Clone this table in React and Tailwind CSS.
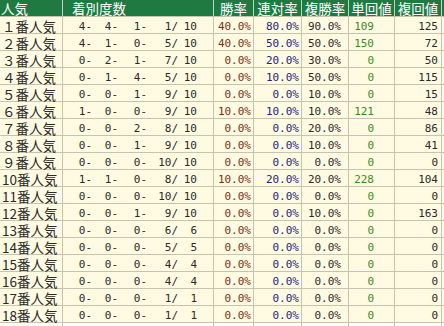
const FW = ["０", "１", "２", "３", "４", "５", "６", "７", "８", "９"];

// [1着, 2着, 3着, 着外, 出走, 勝率, 連対率, 複勝率, 単回値, 複回値]
const rows = [
  [4, 4, 1, 1, 10, "40.0%", "80.0%", "90.0%", 109, 125],
  [4, 1, 0, 5, 10, "40.0%", "50.0%", "50.0%", 150, 72],
  [0, 2, 1, 7, 10, "0.0%", "20.0%", "30.0%", 0, 50],
  [0, 1, 4, 5, 10, "0.0%", "10.0%", "50.0%", 0, 115],
  [0, 0, 1, 9, 10, "0.0%", "0.0%", "10.0%", 0, 15],
  [1, 0, 0, 9, 10, "10.0%", "10.0%", "10.0%", 121, 48],
  [0, 0, 2, 8, 10, "0.0%", "0.0%", "20.0%", 0, 86],
  [0, 0, 1, 9, 10, "0.0%", "0.0%", "10.0%", 0, 41],
  [0, 0, 0, 10, 10, "0.0%", "0.0%", "0.0%", 0, 0],
  [1, 1, 0, 8, 10, "10.0%", "20.0%", "20.0%", 228, 104],
  [0, 0, 0, 10, 10, "0.0%", "0.0%", "0.0%", 0, 0],
  [0, 0, 1, 9, 10, "0.0%", "0.0%", "10.0%", 0, 163],
  [0, 0, 0, 6, 6, "0.0%", "0.0%", "0.0%", 0, 0],
  [0, 0, 0, 5, 5, "0.0%", "0.0%", "0.0%", 0, 0],
  [0, 0, 0, 4, 4, "0.0%", "0.0%", "0.0%", 0, 0],
  [0, 0, 0, 4, 4, "0.0%", "0.0%", "0.0%", 0, 0],
  [0, 0, 0, 1, 1, "0.0%", "0.0%", "0.0%", 0, 0],
  [0, 0, 0, 1, 1, "0.0%", "0.0%", "0.0%", 0, 0],
];

const cols = "grid grid-cols-[62px_150px_39px_47px_46px_45px_46px_1fr] gap-px";
const jp = "font-['Noto_Sans_CJK_JP','Noto_Sans',sans-serif] whitespace-nowrap";
const num = "font-['DejaVu_Sans_Mono','Liberation_Mono',monospace] text-[11px] whitespace-pre";

function label(i) {
  const n = i + 1;
  return (n < 10 ? FW[n] : String(n)) + "番人気";
}

export default function App() {
  return (
    <div className="w-[444px] h-[326px] overflow-hidden bg-[#c6c3ae] flex flex-col gap-px">
      {/* ヘッダー */}
      <div className={`${cols} bg-[#b9d6c1] shrink-0`}>
        {["人気", "着別度数", "勝率", "連対率", "複勝率", "単回値", "複回値", ""].map((h, i) => (
          <div
            key={i}
            className={`h-4 bg-[#1f7a42] text-white text-[13.5px] leading-[16px] ${jp} ${
              i === 0 ? "pl-[1px]" : i === 1 ? "pl-[9px]" : "text-center"
            }`}
          >
            {h}
          </div>
        ))}
      </div>

      {rows.map((r, i) => (
        <div key={i} className={`${cols} shrink-0`}>
          <div className={`h-4 bg-[#fffbe3] text-[#2a2a2a] text-[13.5px] leading-[16px] pt-px pl-[2px] ${jp}`}>
            {label(i)}
          </div>
          <div className={`h-4 bg-[#fffbe3] text-[#2a2a2a] flex pt-[2px] leading-[16px] ${num}`}>
            <span className="w-[29px] text-right">{r[0]}-</span>
            <span className="w-[26px] text-right">{r[1]}-</span>
            <span className="w-[29px] text-right">{r[2]}-</span>
            <span className="w-[31px] text-right">{r[3]}/</span>
            <span className="w-[19px] text-right">{r[4]}</span>
          </div>
          <div className={`h-4 bg-[#fffbe3] text-[#7b2f14] text-right pr-[2px] pt-[2px] leading-[16px] ${num}`}>{r[5]}</div>
          <div className={`h-4 bg-[#fffbe3] text-[#25257a] text-right pr-[2px] pt-[2px] leading-[16px] ${num}`}>{r[6]}</div>
          <div className={`h-4 bg-[#fffbe3] text-[#2a2a2a] text-right pr-[7px] pt-[2px] leading-[16px] ${num}`}>{r[7]}</div>
          <div className={`h-4 bg-[#fffbe3] text-[#3d8a1f] text-right pr-[20px] pt-[2px] leading-[16px] ${num}`}>{r[8]}</div>
          <div className={`h-4 bg-[#fffbe3] text-[#2a2a2a] text-right pr-[3px] pt-[2px] leading-[16px] ${num}`}>{r[9]}</div>
          <div className="h-4 bg-[#fffbe3]" />
        </div>
      ))}

      {/* 下端（切れた行） */}
      <div className={`${cols} flex-1`}>
        {Array.from({ length: 8 }).map((_, i) => (
          <div key={i} className="bg-white" />
        ))}
      </div>
    </div>
  );
}
